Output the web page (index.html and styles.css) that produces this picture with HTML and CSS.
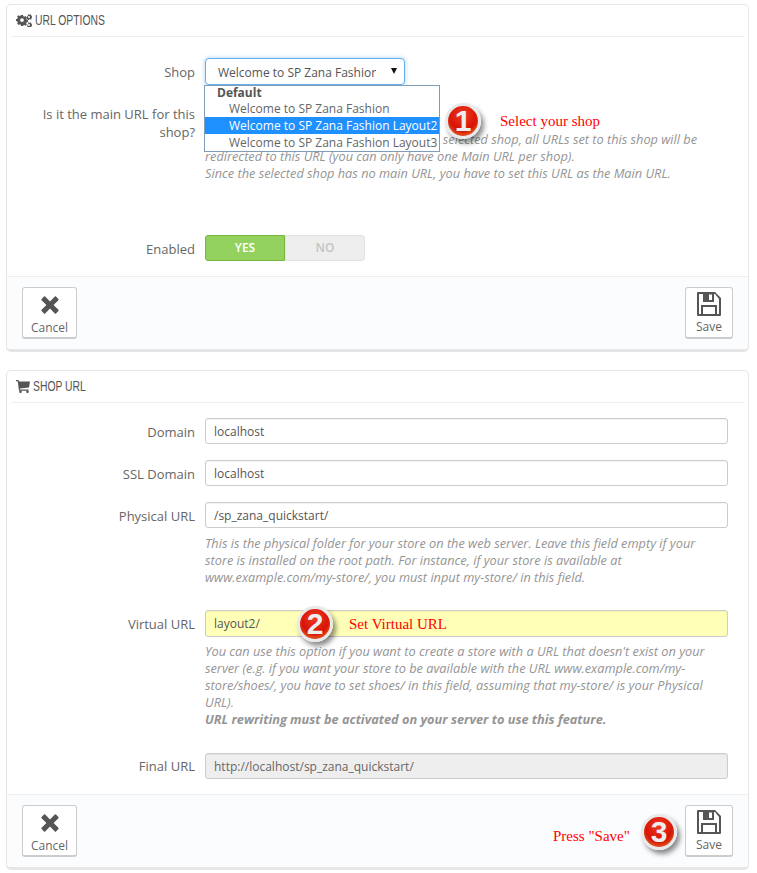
FILE: index.html
```html
<!DOCTYPE html>
<html lang="en">
<head>
<meta charset="utf-8">
<title>Shop URL</title>
<link rel="stylesheet" href="styles.css">
</head>
<body>
<main class="page">
  <section class="panel">
    <h2 class="panel-head">
      <svg class="head-icon" viewBox="0 0 16 13" width="16" height="13"><path fill="#555" fill-rule="evenodd" d="M5 1h2l.3 1.3 1 .4L9.500 2l1.400 1.400-.7 1.200.4 1 1.400.3v2l-1.400.3-.4 1 .7 1.200-1.400 1.400-1.200-.7-1 .4L7 12H5l-.3-1.300-1-.4-1.200.7L1.100 9.600l.7-1.200-.4-1L0 7.100v-2l1.400-.3.4-1-.7-1.200L2.500 1.200l1.200.7 1-.4zM6 4.200a1.900 1.900 0 1 0 0 3.800 1.900 1.900 0 0 0 0-3.800z"/><path fill="#555" fill-rule="evenodd" d="M13 0l.3.800.8.100.5-.6.900.6-.3.800.5.6.800.1v1.100l-.8.200-.4.700.3.800-.9.500-.6-.6-.8.100-.3.800h-1l-.3-.8-.7-.2-.5-.6.300-.8-.100-.600 1-1 .2-.6L12 .8zM13 2a1 1 0 1 0 0 2 1 1 0 0 0 0-2zM13 8l.3.800.8.100.5-.6.900.6-.3.800.5.600.800.100v1.100l-.8.200-.4.700.1.600h-3.800l-.4-.6.100-.8-.100-.600 1-1 .2-.6L12 8.800zM13 10a1 1 0 1 0 0 2 1 1 0 0 0 0-2z"/></svg>
      <span class="head-text">URL OPTIONS</span>
    </h2>
    <div class="form form-wide">
      <div class="row">
        <label class="label label-low">Shop</label>
        <div class="field">
          <div class="select">
            <span class="select-text">Welcome to SP Zana Fashion Layout2</span>
            <i class="select-arrow"></i>
            <ul class="popup">
              <li class="popup-group">Default</li>
              <li class="popup-item">Welcome to SP Zana Fashion</li>
              <li class="popup-item popup-active">Welcome to SP Zana Fashion Layout2</li>
              <li class="popup-item">Welcome to SP Zana Fashion Layout3</li>
            </ul>
          </div>
        </div>
      </div>
      <div class="row row-main">
        <label class="label label-top">Is it the main URL for this shop?</label>
        <div class="field">
          <p class="help help-main">If you set this URL as the Main URL for the selected shop, all URLs set to this shop will be<br>redirected to this URL (you can only have one Main URL per shop).<br>Since the selected shop has no main URL, you have to set this URL as the Main URL.</p>
        </div>
      </div>
      <div class="row row-last">
        <label class="label label-low">Enabled</label>
        <div class="field">
          <div class="switch">
            <span class="switch-on">YES</span>
            <span class="switch-off">NO</span>
          </div>
        </div>
      </div>
    </div>
    <footer class="panel-foot">
      <button class="btn btn-cancel" type="button">
        <svg viewBox="0 0 18 18" width="18" height="18"><path fill="#555" d="M4.200.6 9 5.400 13.800.6q.6-.6 1.200 0L17.400 3q.6.6 0 1.200L12.600 9l4.800 4.800q.6.600 0 1.200L15 17.400q-.6.600-1.200 0L9 12.600l-4.800 4.800q-.6.600-1.200 0L.6 15q-.6-.6 0-1.200L5.400 9 .6 4.200Q0 3.600.6 3L3 .6q.6-.6 1.200 0z"/></svg>
        <span>Cancel</span>
      </button>
      <button class="btn btn-save" type="button">
        <svg viewBox="0 0 24 24" width="24" height="24"><path fill="#555" fill-rule="evenodd" d="M1 0h17l6 6v17q0 1-1 1H1q-1 0-1-1V1q0-1 1-1zM2 2v20h2V13h16v9h2V7l-4-5h-1v8H6V2zM6 15v7h12v-7zM12 2.500v5.500h3V2.500z"/></svg>
        <span>Save</span>
      </button>
    </footer>
    <span class="badge badge-one">1</span>
    <span class="note note-one">Select your shop</span>
  </section>

  <section class="panel">
    <h2 class="panel-head">
      <svg class="head-icon" viewBox="0 0 14 13" width="14" height="13"><path fill="#555" d="M0 0h2.500l.5 1.500h11L13 7.500 3.800 8.500l.2 1h8.500v1.200H3L1.700 1.300H0z"/><circle fill="#555" cx="4.500" cy="11.700" r="1.300"/><circle fill="#555" cx="11.500" cy="11.700" r="1.300"/></svg>
      <span class="head-text">SHOP URL</span>
    </h2>
    <div class="form">
      <div class="row">
        <label class="label label-low">Domain</label>
        <div class="field"><input class="input" type="text" value="localhost"></div>
      </div>
      <div class="row">
        <label class="label label-low">SSL Domain</label>
        <div class="field"><input class="input" type="text" value="localhost"></div>
      </div>
      <div class="row row-help">
        <label class="label label-low">Physical URL</label>
        <div class="field">
          <input class="input" type="text" value="/sp_zana_quickstart/">
          <p class="help">This is the physical folder for your store on the web server. Leave this field empty if your<br>store is installed on the root path. For instance, if your store is available at<br>www.example.com/my-store/, you must input my-store/ in this field.</p>
        </div>
      </div>
      <div class="row row-help row-virtual">
        <label class="label label-low">Virtual URL</label>
        <div class="field">
          <input class="input input-hl" type="text" value="layout2/">
          <p class="help">You can use this option if you want to create a store with a URL that doesn't exist on your<br>server (e.g. if you want your store to be available with the URL www.example.com/my-<br>store/shoes/, you have to set shoes/ in this field, assuming that my-store/ is your Physical<br>URL).<br><strong>URL rewriting must be activated on your server to use this feature.</strong></p>
        </div>
      </div>
      <div class="row row-last">
        <label class="label label-mid">Final URL</label>
        <div class="field"><input class="input input-off" type="text" value="http://localhost/sp_zana_quickstart/" disabled></div>
      </div>
    </div>
    <footer class="panel-foot">
      <button class="btn btn-cancel" type="button">
        <svg viewBox="0 0 18 18" width="18" height="18"><path fill="#555" d="M4.200.6 9 5.400 13.800.6q.6-.6 1.200 0L17.400 3q.6.6 0 1.200L12.600 9l4.800 4.800q.6.600 0 1.200L15 17.400q-.6.600-1.200 0L9 12.600l-4.800 4.800q-.6.600-1.200 0L.6 15q-.6-.6 0-1.200L5.400 9 .6 4.200Q0 3.600.6 3L3 .6q.6-.6 1.200 0z"/></svg>
        <span>Cancel</span>
      </button>
      <button class="btn btn-save" type="button">
        <svg viewBox="0 0 24 24" width="24" height="24"><path fill="#555" fill-rule="evenodd" d="M1 0h17l6 6v17q0 1-1 1H1q-1 0-1-1V1q0-1 1-1zM2 2v20h2V13h16v9h2V7l-4-5h-1v8H6V2zM6 15v7h12v-7zM12 2.500v5.500h3V2.500z"/></svg>
        <span>Save</span>
      </button>
    </footer>
    <span class="badge badge-two">2</span>
    <span class="note note-two">Set Virtual URL</span>
    <span class="badge badge-three">3</span>
    <span class="note note-three">Press "Save"</span>
  </section>
</main>
</body>
</html>
```
FILE: styles.css
```css
* { box-sizing: border-box; }
html, body { margin: 0; padding: 0; background: #fff; }
body { font-family: "Open Sans", "Liberation Sans", sans-serif; font-size: 13px; color: #666; }
.page { display: flex; flex-direction: column; gap: 18px; padding: 4px 8px 0 6px; }
.panel { position: relative; border: 1px solid #e6e6e6; border-bottom-width: 3px; border-radius: 5px; background: #fff; }
.panel-head { display: flex; align-items: center; gap: 3px; height: 32px; margin: 0 4px; padding: 0 5px 1px; border-bottom: 1px solid #eee; font-family: "Liberation Sans", sans-serif; font-size: 14px; font-weight: 400; color: #555; }
.head-text { display: inline-block; transform: scaleX(.74); transform-origin: 0 50%; white-space: nowrap; }
.head-icon { flex: none; }
.form { padding: 15px 20px 15px 0; }
.form-wide { padding-top: 21px; }
.row { display: flex; gap: 10px; margin-bottom: 16px; }
.row-help { margin-bottom: 24px; }
.row-virtual { margin-bottom: 25px; }
.row-last { margin-bottom: 0; }
.row-main { margin-top: 21px; margin-bottom: 53px; }
.label { flex: none; width: 188px; text-align: right; line-height: 17.5px; color: #666; }
.label-mid { line-height: 26px; }
.label-low { height: 26px; padding-top: 1px; line-height: 26px; }
.label-top { padding-left: 20px; }
.field { flex: 1; min-width: 0; }
.select { position: relative; width: 200px; height: 27px; padding: 0 24px 0 12px; border: 1px solid #66afe9; border-radius: 4px; background: #fff; font-size: 12px; line-height: 27px; box-shadow: 0 0 4px rgba(102,175,233,.6); color: #555; white-space: nowrap; }
.select-text { display: block; width: 158px; overflow: hidden; }
.select-arrow { position: absolute; right: 7px; top: 9px; border: 3.500px solid transparent; border-top: 6px solid #111; border-bottom: 0; }
.popup { position: absolute; z-index: 2; left: -2px; top: 26px; width: 236px; margin: 0; padding: 0; list-style: none; border: 1px solid #7f9db9; background: #fff; color: #666; line-height: 17px; }
.popup-group { height: 14px; padding-left: 12px; font-weight: 700; line-height: 14px; color: #555; }
.popup-item { padding-left: 24px; white-space: nowrap; }
.popup-active { background: #1e90ff; color: #fff; }
.help { margin: 7px -10px 0 0; font-size: 12.750px; font-style: italic; line-height: 17px; color: #959595; white-space: nowrap; }
.help-main { margin-top: 25px; }
.switch { display: flex; width: 160px; height: 26px; border-radius: 3px; font-size: 12px; font-weight: 600; line-height: 24px; text-align: center; }
.switch-on { flex: 1; border: 1px solid #79b53f; border-radius: 3px 0 0 3px; background: #93d15f; color: #fff; }
.switch-off { flex: 1; border: 1px solid #e3e3e3; border-radius: 0 3px 3px 0; background: #eee; color: #c4c4c4; }
.input { display: block; width: 100%; height: 26px; padding: 0 8px; border: 1px solid #ccc; border-radius: 3px; background: #fff; font: inherit; font-size: 12px; color: #555; box-shadow: inset 0 1px 1px rgba(0,0,0,.05); }
.input-hl { height: 27px; margin-bottom: -1px; background: #ffffb8; }
.input-off { background: #eee; color: #666; opacity: 1; }
.panel-foot { display: flex; justify-content: space-between; padding: 10px 15px 10px 15px; border-top: 1px solid #eee; border-radius: 0 0 4px 4px; background: #fbfcfe; }
.btn { display: flex; flex-direction: column; align-items: center; height: 52px; margin: 0; padding: 0; border: 1px solid #ccc; border-bottom-width: 2px; border-radius: 3px; background: #fff; font: 12px/16px "Open Sans", "Liberation Sans", sans-serif; color: #666; }
.btn-cancel { width: 55px; padding-top: 8px; }
.btn-cancel span { margin-top: 6px; }
.btn-save { width: 48px; padding-top: 4px; }
.btn-save span { margin-top: 3px; }
.badge { position: absolute; z-index: 3; display: block; width: 36px; height: 36px; border: 3px solid #e9e9e9; border-radius: 50%; background: radial-gradient(circle at 50% 30%, #ee3a22 0%, #d81406 55%, #a80c02 100%); box-shadow: 3px 4px 5px rgba(0,0,0,.45), inset 0 -3px 3px rgba(255,110,40,.6); font: 700 30px/29px "Liberation Sans", sans-serif; text-align: center; color: #eee; }
.badge-one { left: 438px; top: 98px; }
.badge-two { left: 290px; top: 235px; }
.badge-three { left: 634px; top: 443px; }
.note { position: absolute; z-index: 3; font: 15px/18px "Liberation Serif", serif; color: #f00; white-space: nowrap; }
.note-one { left: 493px; top: 107px; }
.note-two { left: 342px; top: 244px; }
.note-three { left: 546px; top: 456px; }
```
